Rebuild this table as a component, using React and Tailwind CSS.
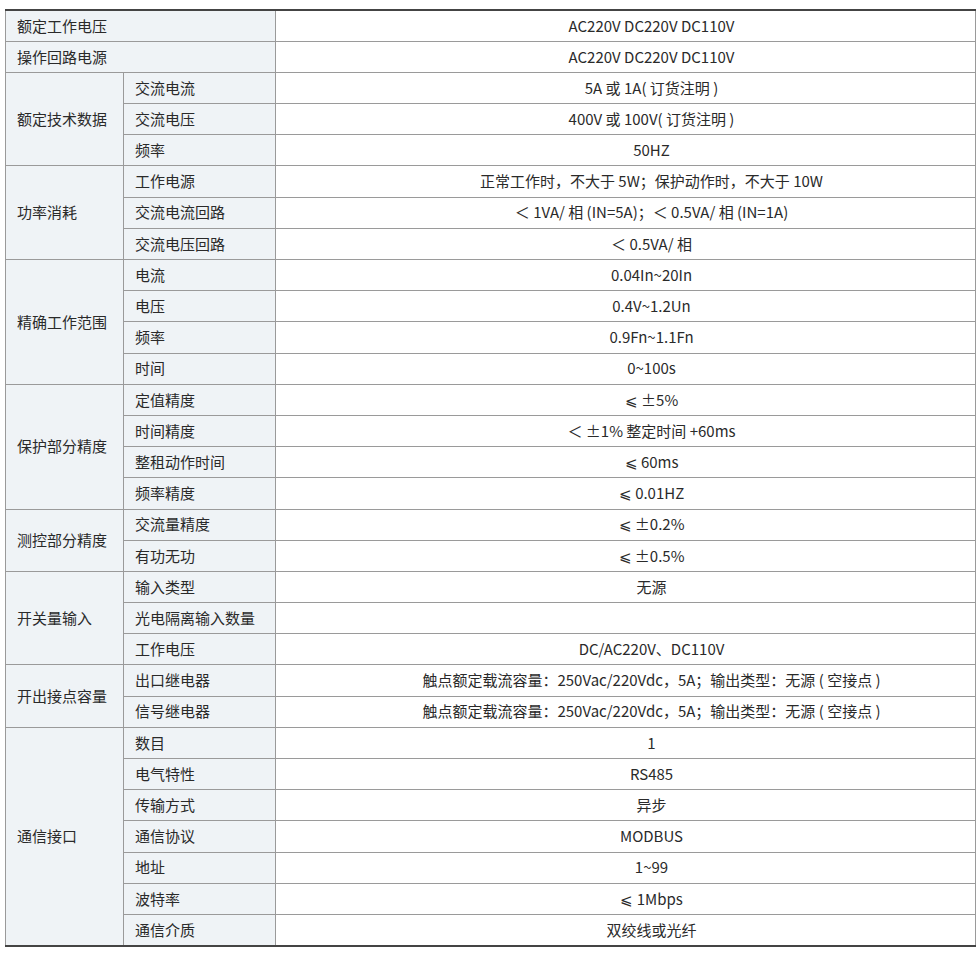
import React from "react";

const groups = [
  { label: "额定工作电压", value: "AC220V DC220V DC110V" },
  { label: "操作回路电源", value: "AC220V DC220V DC110V" },
  {
    label: "额定技术数据",
    rows: [
      ["交流电流", "5A 或 1A( 订货注明 )"],
      ["交流电压", "400V 或 100V( 订货注明 )"],
      ["频率", "50HZ"],
    ],
  },
  {
    label: "功率消耗",
    rows: [
      ["工作电源", "正常工作时，不大于 5W；保护动作时，不大于 10W"],
      ["交流电流回路", "＜ 1VA/ 相 (IN=5A)；＜ 0.5VA/ 相 (IN=1A)"],
      ["交流电压回路", "＜ 0.5VA/ 相"],
    ],
  },
  {
    label: "精确工作范围",
    rows: [
      ["电流", "0.04In~20In"],
      ["电压", "0.4V~1.2Un"],
      ["频率", "0.9Fn~1.1Fn"],
      ["时间", "0~100s"],
    ],
  },
  {
    label: "保护部分精度",
    rows: [
      ["定值精度", "⩽ ±5%"],
      ["时间精度", "＜ ±1% 整定时间 +60ms"],
      ["整租动作时间", "⩽ 60ms"],
      ["频率精度", "⩽ 0.01HZ"],
    ],
  },
  {
    label: "测控部分精度",
    rows: [
      ["交流量精度", "⩽ ±0.2%"],
      ["有功无功", "⩽ ±0.5%"],
    ],
  },
  {
    label: "开关量输入",
    rows: [
      ["输入类型", "无源"],
      ["光电隔离输入数量", ""],
      ["工作电压", "DC/AC220V、DC110V"],
    ],
  },
  {
    label: "开出接点容量",
    rows: [
      ["出口继电器", "触点额定载流容量：250Vac/220Vdc，5A；输出类型：无源 ( 空接点 )"],
      ["信号继电器", "触点额定载流容量：250Vac/220Vdc，5A；输出类型：无源 ( 空接点 )"],
    ],
  },
  {
    label: "通信接口",
    rows: [
      ["数目", "1"],
      ["电气特性", "RS485"],
      ["传输方式", "异步"],
      ["通信协议", "MODBUS"],
      ["地址", "1~99"],
      ["波特率", "⩽ 1Mbps"],
      ["通信介质", "双绞线或光纤"],
    ],
  },
];

const label = "border border-[#9a9a9a] bg-[#eff3f6] pl-[11px] pr-2 text-left align-middle";
const value = "border border-[#9a9a9a] bg-white pl-[64px] pr-3 text-center align-middle";

const App = () => {
  return (
    <div className="w-[980px] h-[953px] bg-white pt-[9px] px-[5px] font-['Noto_Sans_CJK_SC','Noto_Sans',sans-serif] text-[15px] text-[#2a2a2a]">
      <table className="w-[971px] border-collapse border-y-2 border-y-[#444] table-fixed">
        <colgroup>
          <col className="w-[118px]" />
          <col className="w-[152px]" />
          <col />
        </colgroup>
        <tbody>
          {groups.map((g) =>
            g.rows ? (
              g.rows.map((r, i) => (
                <tr key={g.label + r[0]} className="h-[31.2px]">
                  {i === 0 && (
                    <td rowSpan={g.rows.length} className={label}>
                      {g.label}
                    </td>
                  )}
                  <td className={label}>{r[0]}</td>
                  <td className={value}>{r[1]}</td>
                </tr>
              ))
            ) : (
              <tr key={g.label} className="h-[31.2px]">
                <td colSpan={2} className={label}>
                  {g.label}
                </td>
                <td className={value}>{g.value}</td>
              </tr>
            )
          )}
        </tbody>
      </table>
    </div>
  );
};

export default App;
